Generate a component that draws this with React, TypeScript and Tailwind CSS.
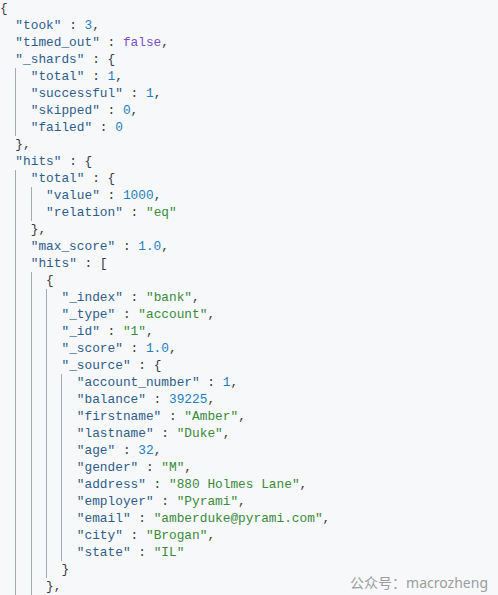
import type { ReactNode } from "react";

type Json = string | number | boolean | null | JsonObj | Json[] | { raw: string };
interface JsonObj {
	[key: string]: Json;
}

// response is cut off at the bottom of the window, so these blocks stay open
const OPEN_KEYS = new Set(["hits"]);

const doc: JsonObj = {
	took: 3,
	timed_out: false,
	_shards: { total: 1, successful: 1, skipped: 0, failed: 0 },
	hits: {
		total: { value: 1000, relation: "eq" },
		max_score: { raw: "1.0" },
		hits: [
			{
				_index: "bank",
				_type: "account",
				_id: "1",
				_score: { raw: "1.0" },
				_source: {
					account_number: 1,
					balance: 39225,
					firstname: "Amber",
					lastname: "Duke",
					age: 32,
					gender: "M",
					address: "880 Holmes Lane",
					employer: "Pyrami",
					email: "amberduke@pyrami.com",
					city: "Brogan",
					state: "IL",
				},
			},
		],
	},
};

const Punct = ({ children }: { children: ReactNode }) => (
	<span className="text-[#383a42]">{children}</span>
);

function Scalar({ value }: { value: Json }) {
	if (typeof value === "string")
		return <span className="text-[#3a8a3a]">"{value}"</span>;
	if (typeof value === "number")
		return <span className="text-[#1d7fbf]">{value}</span>;
	if (typeof value === "boolean" || value === null)
		return <span className="text-[#7a4fc9]">{String(value)}</span>;
	if (value && typeof value === "object" && "raw" in value)
		return <span className="text-[#1d7fbf]">{(value as { raw: string }).raw}</span>;
	return null;
}

function isContainer(v: Json): v is JsonObj | Json[] {
	return typeof v === "object" && v !== null && !("raw" in v);
}

function Line({ children }: { children: ReactNode }) {
	return <div className="h-[17px] leading-[17px] whitespace-pre">{children}</div>;
}

function Key({ name }: { name: string }) {
	return (
		<>
			<span className="text-[#2f5d8a]">"{name}"</span>
			<Punct> : </Punct>
		</>
	);
}

function Node({
	name,
	value,
	last,
	root,
}: {
	name?: string;
	value: Json;
	last: boolean;
	root?: boolean;
}) {
	const comma = last ? null : <Punct>,</Punct>;
	if (!isContainer(value)) {
		return (
			<Line>
				{name !== undefined && <Key name={name} />}
				<Scalar value={value} />
				{comma}
			</Line>
		);
	}
	const arr = Array.isArray(value);
	const open = root || (name !== undefined && OPEN_KEYS.has(name));
	const entries: [string | undefined, Json][] = arr
		? (value as Json[]).map((v) => [undefined, v])
		: Object.entries(value as JsonObj);
	return (
		<div>
			<Line>
				{name !== undefined && <Key name={name} />}
				<Punct>{arr ? "[" : "{"}</Punct>
			</Line>
			<div
				className={
					root
						? "pl-[15.36px]"
						: "border-l border-[#a3aab4] pl-[14.36px]"
				}
			>
				{entries.map(([k, v], i) => (
					<Node
						key={i}
						name={k}
						value={v}
						last={i === entries.length - 1 && !open}
					/>
				))}
			</div>
			{!open && (
				<Line>
					<Punct>{arr ? "]" : "}"}</Punct>
					{comma}
				</Line>
			)}
		</div>
	);
}

export default function App() {
	return (
		<div className="relative h-[595px] w-[498px] overflow-hidden bg-[#f6f8fa]">
			<div className="font-['Liberation_Mono',monospace] text-[12.8px]">
				<Node value={doc} last root />
			</div>
			<div className="absolute right-[10px] bottom-[3px] font-['Noto_Sans','Noto_Sans_CJK_SC',sans-serif] text-[14px] leading-[18px] text-[#9d9d9d]">
				公众号：macrozheng
			</div>
		</div>
	);
}
